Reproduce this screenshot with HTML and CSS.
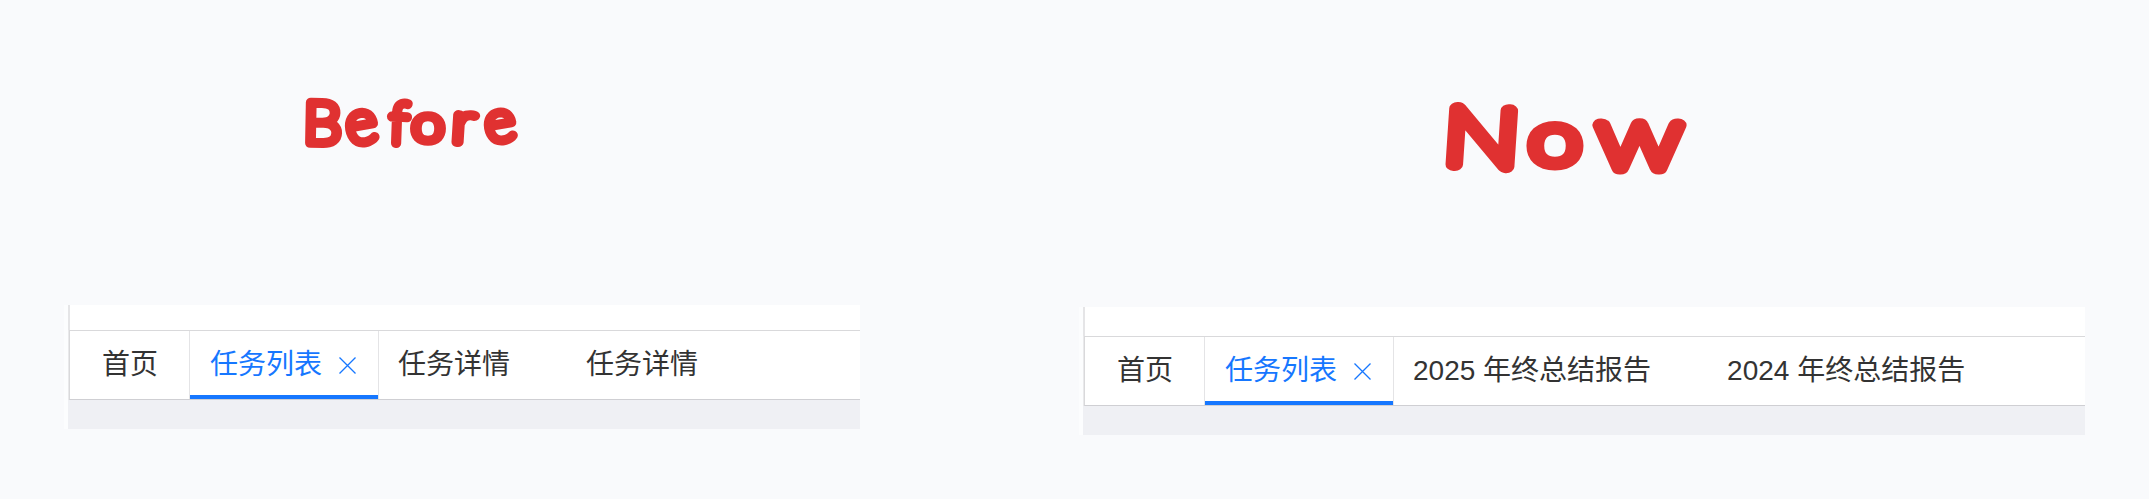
FILE: index.html
```html
<!DOCTYPE html>
<html lang="zh-CN">
<head>
<meta charset="utf-8">
<title>Before / Now</title>
<link rel="stylesheet" href="styles.css">
</head>
<body>
<main class="compare">
  <section class="side side-before">
    <h2 class="heading">
      <svg class="lettering lettering-before" width="260" height="100" viewBox="280 70 260 100" role="img">
        <text class="ink" y="143" font-size="57"><tspan x="303" rotate="1" font-size="58" textLength="38" lengthAdjust="spacingAndGlyphs">B</tspan><tspan x="349" y="145" rotate="-10" font-size="60" textLength="31" lengthAdjust="spacingAndGlyphs">e</tspan><tspan x="389" y="143" rotate="2" font-size="57">f</tspan><tspan x="412" y="141" font-size="50" textLength="32" lengthAdjust="spacingAndGlyphs">o</tspan><tspan x="451" y="142" rotate="3" font-size="56" textLength="23" lengthAdjust="spacingAndGlyphs">r</tspan><tspan x="488" y="143" rotate="-10" font-size="57" textLength="30" lengthAdjust="spacingAndGlyphs">e</tspan></text>
      </svg>
    </h2>
    <div class="panel">
      <div class="strip"></div>
      <nav class="tabs">
        <a class="tab home">首页</a>
        <a class="tab active">任务列表<svg class="close" width="17" height="17" viewBox="0 0 17 17"><path d="M.5 .5 16.5 16.5M16.5 .5 .5 16.5"/></svg></a>
        <a class="tab">任务详情</a>
        <a class="tab">任务详情</a>
      </nav>
      <div class="content"></div>
    </div>
  </section>
  <section class="side side-now">
    <h2 class="heading">
      <svg class="lettering lettering-now" width="290" height="110" viewBox="1420 80 290 110" role="img">
        <text class="ink ink-large" y="164" font-size="80"><tspan x="1442" rotate="3" textLength="76" lengthAdjust="spacingAndGlyphs">N</tspan><tspan x="1529" y="164" font-size="74" textLength="52" lengthAdjust="spacingAndGlyphs">o</tspan><tspan x="1597" y="168" font-size="89" textLength="85" lengthAdjust="spacingAndGlyphs">w</tspan></text>
      </svg>
    </h2>
    <div class="panel">
      <div class="strip"></div>
      <nav class="tabs">
        <a class="tab home">首页</a>
        <a class="tab active">任务列表<svg class="close" width="17" height="17" viewBox="0 0 17 17"><path d="M.5 .5 16.5 16.5M16.5 .5 .5 16.5"/></svg></a>
        <a class="tab">2025 年终总结报告</a>
        <a class="tab">2024 年终总结报告</a>
      </nav>
      <div class="content"></div>
    </div>
  </section>
</main>
</body>
</html>
```
FILE: styles.css
```css
* { box-sizing: border-box; }
body {
  margin: 0;
  background: #f9fafc;
  font-family: "Liberation Sans", "Noto Sans CJK SC", sans-serif;
  color: #333;
}
.compare { display: flex; height: 499px; overflow: hidden; }
.side { display: flex; flex-direction: column; }
.side-before { width: 1079px; padding-left: 64px; }
.side-now { width: 1070px; }
.heading { margin: 0; }
.lettering { display: block; }
.side-before .heading { height: 305px; padding: 70px 0 0 216px; }
.side-now .heading { height: 307px; padding: 80px 0 0 341px; }
.ink {
  font-family: Lato, sans-serif;
  font-weight: 100;
  fill: #e03131;
  stroke: #e03131;
  stroke-width: 9.5px;
  stroke-linejoin: round;
  stroke-linecap: round;
}
.ink-large { stroke-width: 13px; }
.side-before .panel { width: 796px; padding-left: 4px; }
.side-now .panel { width: 1006px; padding-left: 4px; }
.panel { background: linear-gradient(90deg, #fcfdfe 4px, #fff 4px); }
.strip { height: 25px; border-left: 2px solid #e5e5e7; }
.side-now .strip { height: 29px; }
.tabs {
  display: flex;
  height: 70px;
  margin-left: 1px;
  border: 1px solid #d9d9db;
  border-right: 0;
  border-bottom-color: #cfcfd3;
  box-shadow: -1px 0 0 #e9e9eb;
}
.tab {
  display: flex;
  align-items: center;
  padding: 0 57px 0 19px;
  font-size: 28px;
  line-height: 40px;
  white-space: nowrap;
}
.home { width: 119px; padding: 0 0 0 32px; }
.active {
  width: 190px;
  padding: 0 20px;
  color: #1677ff;
  border-left: 1px solid #e4e4e6;
  border-right: 1px solid #e4e4e6;
  background: linear-gradient(#1677ff, #1677ff) left bottom / 100% 4px no-repeat;
}
.close {
  width: 17px;
  height: 17px;
  margin-left: 17px;
  fill: none;
  stroke: #1677ff;
  stroke-width: 1.3;
}
.content { height: 29px; background: #eff0f4; }
```
